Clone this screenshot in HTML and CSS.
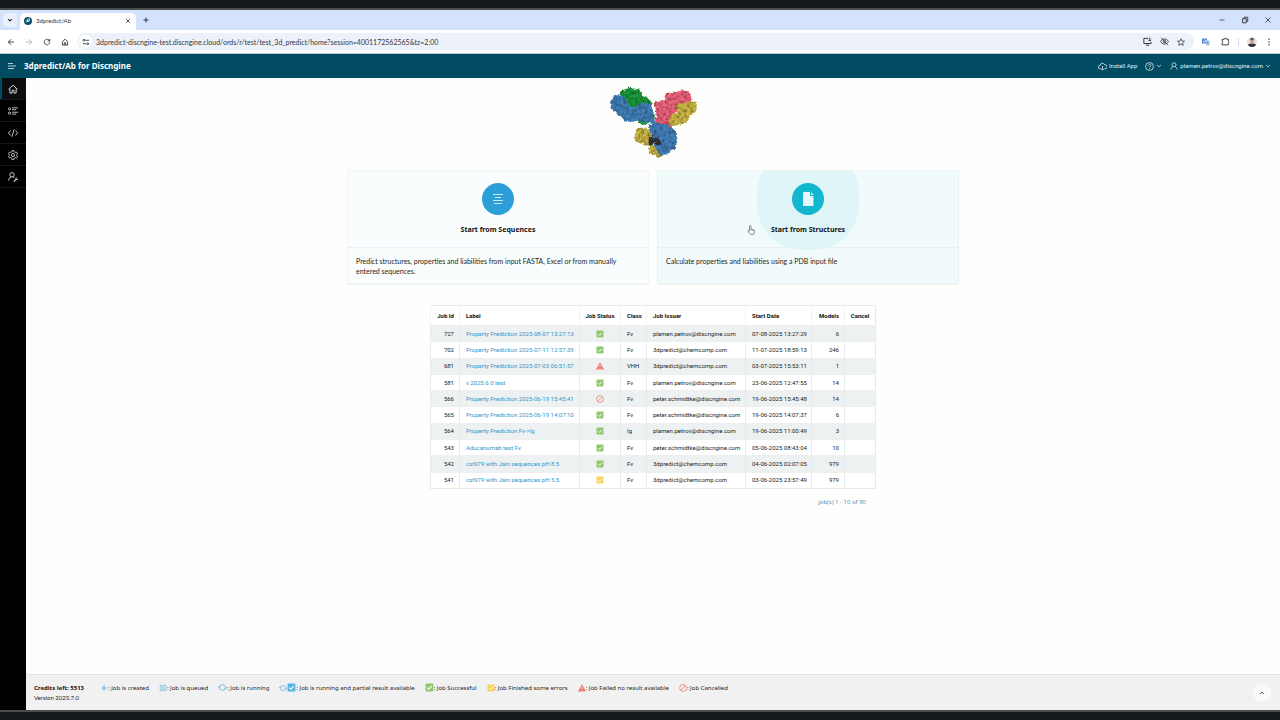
FILE: index.html
```html
<!DOCTYPE html>
<html lang="en">
<head>
<meta charset="utf-8">
<title>3dpredict/Ab</title>
<link rel="stylesheet" href="styles.css">
</head>
<body>
<svg class="sprite" aria-hidden="true">
  <symbol id="ok" viewBox="0 0 16 16"><rect x="1" y="1" width="14" height="14" rx="1.5" fill="currentColor"/><path d="M4 8.2l2.8 2.8L12 5.5" fill="none" stroke="#fff" stroke-width="1.8"/></symbol>
  <symbol id="warn" viewBox="0 0 16 16"><path d="M8 .5L16 15H0z" fill="currentColor"/><path d="M8 5.5v4.500M8 11.500v1.800" stroke="#fff" stroke-width="1.600"/></symbol>
  <symbol id="ban" viewBox="0 0 16 16"><g fill="none" stroke="currentColor" stroke-width="1.500"><circle cx="8" cy="8" r="6.800"/><path d="M3.300 12.700l9.400-9.400"/></g></symbol>
  <symbol id="plus" viewBox="0 0 16 16"><path d="M8 2v12M2 8h12" stroke="currentColor" stroke-width="1.800"/></symbol>
  <symbol id="queue" viewBox="0 0 16 16"><path d="M2.500 2.500h4v11h-4zM9.500 2.500h4v11h-4z" fill="none" stroke="currentColor" stroke-width="1.300"/></symbol>
  <symbol id="spin" viewBox="0 0 16 16"><g fill="none" stroke="currentColor" stroke-width="1.500"><path d="M2.200 7.500a6 6 0 0 1 11.600 0M13.800 8.500a6 6 0 0 1-11.600 0"/><path d="M0 6l2.200 2.500 2.300-2.500M16 10l-2.200-2.500L11.500 10"/></g></symbol>
  <symbol id="chev" viewBox="0 0 16 16"><path d="M3 5.500l5 5 5-5" fill="none" stroke="currentColor" stroke-width="2"/></symbol>
</svg>

<div class="edge edge-top"></div>

<header class="browser">
  <div class="tabs">
    <button class="tab-search" aria-label="Search tabs"><svg class="i6" viewBox="0 0 16 16"><path d="M3 5.500l5 5 5-5" fill="none" stroke="currentColor" stroke-width="3"/></svg></button>
    <div class="tab">
      <svg class="i8" viewBox="0 0 16 16"><circle cx="8" cy="8" r="8" fill="#0b5269"/><path d="M5 11C4 7 6 3 12 3c1 4-1 7-5 7z" fill="#d9edf5"/><circle cx="9.500" cy="6" r="1.500" fill="#0b5269"/></svg>
      <span class="tab-title">3dpredict/Ab</span>
      <button class="plain" aria-label="Close tab"><svg class="i6" viewBox="0 0 16 16"><path d="M3 3l10 10M13 3L3 13" stroke="currentColor" stroke-width="2.200"/></svg></button>
    </div>
    <button class="plain new-tab" aria-label="New tab"><svg class="i8" viewBox="0 0 16 16"><path d="M8 3v10M3 8h10" stroke="currentColor" stroke-width="2"/></svg></button>
    <div class="window-buttons">
      <button class="plain" aria-label="Minimize"><svg class="i8" viewBox="0 0 16 16"><path d="M3 8h10" stroke="currentColor" stroke-width="1.500"/></svg></button>
      <button class="plain" aria-label="Restore"><svg class="i8" viewBox="0 0 16 16"><path d="M3 5.500h7.500v8H3zM6 5.500v-3h7.500v8h-3" fill="none" stroke="currentColor" stroke-width="1.800"/></svg></button>
      <button class="plain" aria-label="Close"><svg class="i8" viewBox="0 0 16 16"><path d="M3 3l10 10M13 3L3 13" stroke="currentColor" stroke-width="1.600"/></svg></button>
    </div>
  </div>
  <div class="toolbar">
    <button class="plain" aria-label="Back"><svg class="i8" viewBox="0 0 16 16"><path d="M14 8H3M8 2.500L2.500 8 8 13.500" fill="none" stroke="currentColor" stroke-width="1.800"/></svg></button>
    <button class="plain faint" aria-label="Forward"><svg class="i8" viewBox="0 0 16 16"><path d="M2 8h11M8 2.500L13.500 8 8 13.500" fill="none" stroke="currentColor" stroke-width="1.800"/></svg></button>
    <button class="plain" aria-label="Reload"><svg class="i8" viewBox="0 0 16 16"><path d="M13.500 8a5.500 5.500 0 1 1-1.800-4.100L13.500 6M13.500 1.800V6H9.300" fill="none" stroke="currentColor" stroke-width="1.700"/></svg></button>
    <button class="plain" aria-label="Home"><svg class="i8" viewBox="0 0 16 16"><path d="M2.800 7L8 2.500 13.200 7v7.200H2.800zM6.500 14v-4.500h3V14" fill="none" stroke="currentColor" stroke-width="1.700"/></svg></button>
    <div class="address">
      <button class="site-info" aria-label="Site information"><svg class="i8" viewBox="0 0 16 16"><g fill="none" stroke="currentColor" stroke-width="1.800"><path d="M7 4.500h7M2 11.500h6"/><circle cx="4" cy="4.500" r="1.800"/><circle cx="11.500" cy="11.500" r="1.800"/></g></svg></button>
      <input class="url" aria-label="Address" value="3dpredict-discngine-test.discngine.cloud/ords/r/test/test_3d_predict/home?session=4001172562565&amp;tz=2:00">
      <button class="plain" aria-label="Install"><svg class="i9" viewBox="0 0 16 16"><path d="M9 2.500H1.500v9h13V9M5 14.500h6M12 1v6M9.500 5L12 7.500 14.500 5" fill="none" stroke="currentColor" stroke-width="1.700"/></svg></button>
      <button class="plain" aria-label="Third-party cookies"><svg class="i9" viewBox="0 0 16 16"><g fill="none" stroke="currentColor" stroke-width="1.500"><path d="M1 8c3-6 11-6 14 0-3 6-11 6-14 0z"/><circle cx="8" cy="8" r="2.500"/><path d="M2 1.500l12 13"/></g></svg></button>
      <button class="plain" aria-label="Bookmark"><svg class="i8" viewBox="0 0 16 16"><path d="M8 1.500l2 4.500 5 .5-3.800 3.300 1.200 4.900L8 12.100l-4.400 2.600 1.200-4.900L1 6.500 6 6z" fill="none" stroke="currentColor" stroke-width="1.500"/></svg></button>
    </div>
    <div class="extensions">
      <button class="plain translate" aria-label="Translate"><svg class="i8" viewBox="0 0 16 16"><rect x="0" y="1" width="10" height="10" rx="1" fill="#4a86dc"/><path d="M7 5h8v10H9z" fill="#b9cfee"/><path d="M2.500 6a2.500 2.500 0 1 0 2.500-2.500M5 6h2.500" fill="none" stroke="#fff" stroke-width="1.200"/><path d="M9 8h5M11.500 7v1c0 2-1 4-2.500 5M10 9c1 2 2 3 4 4" fill="none" stroke="#4472b8"/></svg></button>
      <button class="plain" aria-label="Extensions"><svg class="i9" viewBox="0 0 16 16"><path d="M2 4h4a2 2 0 0 1 4 0h3v4a2 2 0 0 1 0 3.500V14H2v-3.500a2 2 0 0 0 0-3.500z" fill="none" stroke="currentColor" stroke-width="1.700"/></svg></button>
      <span class="bar"></span>
      <button class="plain" aria-label="Profile"><svg class="i10" viewBox="0 0 20 20"><circle cx="10" cy="10" r="10" fill="#dfe2e6"/><path d="M2 16c1-4 15-4 16 0a10 10 0 0 1-16 0z" fill="#23272e"/><path d="M8 10h4v4l-2 2-2-2z" fill="#b7886c"/><ellipse cx="10" cy="7.500" rx="3.500" ry="4.500" fill="#c99b80"/><path d="M6 7c-1-7 9-7 8 0l-1-2H7z" fill="#231d1c"/></svg></button>
      <button class="plain" aria-label="Menu"><svg class="i8" viewBox="0 0 16 16"><g fill="currentColor"><circle cx="8" cy="2.500" r="1.500"/><circle cx="8" cy="8" r="1.500"/><circle cx="8" cy="13.500" r="1.500"/></g></svg></button>
    </div>
  </div>
</header>

<header class="app-bar">
  <button class="plain" aria-label="Main menu"><svg class="i8" viewBox="0 0 16 16"><path d="M0 3h10M0 8h16M0 13h12" stroke="currentColor" stroke-width="1.600"/></svg></button>
  <a class="brand" href="#">3dpredict/Ab for Discngine</a>
  <nav class="app-nav">
    <button class="plain"><svg class="i9" viewBox="0 0 16 16"><path d="M5 12H3.500a3 3 0 0 1 0-6A4.500 4.500 0 0 1 12 5a3.500 3.500 0 0 1 1 7h-1.500M8 7v7.500M5.500 12L8 14.500l2.500-2.500" fill="none" stroke="currentColor" stroke-width="1.400"/></svg>Install App</button>
    <button class="plain" aria-label="Help"><svg class="i9" viewBox="0 0 16 16"><g fill="none" stroke="currentColor" stroke-width="1.400"><circle cx="8" cy="8" r="7"/><path d="M5.800 6.500c0-3 4.600-3 4.600-.3C10.400 8 8 8 8 9.800M8 11v1.500"/></g></svg><svg class="i6"><use href="#chev"/></svg></button>
    <button class="plain"><svg class="i8" viewBox="0 0 16 16"><g fill="none" stroke="currentColor" stroke-width="1.500"><circle cx="8" cy="5.500" r="4"/><path d="M2 15c0-3.500 2-5 4-5.500M14 15c0-3.500-2-5-4-5.500"/></g></svg>plamen.petrov@discngine.com<svg class="i6"><use href="#chev"/></svg></button>
  </nav>
</header>

<div class="shell">
  <nav class="side">
    <a class="side-link current" href="#" aria-label="Home"><svg class="i10" viewBox="0 0 16 16"><path d="M.8 8.500L8 1.800l7.200 6.700M3 7v7.500h3.500V10h3v4.500H13V7" fill="none" stroke="currentColor" stroke-width="1.400"/></svg></a>
    <a class="side-link" href="#" aria-label="Jobs"><svg class="i10" viewBox="0 0 16 16"><g fill="none" stroke="currentColor" stroke-width="1.300"><circle cx="2.500" cy="4.500" r="1.800"/><circle cx="2.500" cy="11.500" r="1.800"/><path d="M6.500 3H16M6.500 6H13M6.500 10H16M6.500 13H13"/></g></svg></a>
    <a class="side-link" href="#" aria-label="Code"><svg class="i10" viewBox="0 0 16 16"><path d="M4 4L.7 8 4 12M12 4l3.300 4L12 12M10 2L6 14" fill="none" stroke="currentColor" stroke-width="1.300"/></svg></a>
    <a class="side-link" href="#" aria-label="Settings"><svg class="i10" viewBox="0 0 16 16"><g fill="none" stroke="currentColor" stroke-width="1.300"><path d="M6.500 1h3l.6 2 1.600.9 2.100-.5 1.500 2.600L13.900 7.500v1.200l1.400 1.400-1.500 2.600-2.100-.5-1.600.9-.6 2h-3l-.6-2-1.600-.9-2.100.5-1.500-2.600 1.400-1.400V7.500L.7 6l1.500-2.600 2.100.5L5.900 3z"/><circle cx="8" cy="8" r="2.500"/></g></svg></a>
    <a class="side-link" href="#" aria-label="Administration"><svg class="i10" viewBox="0 0 16 16"><g fill="none" stroke="currentColor" stroke-width="1.400"><circle cx="6.500" cy="4.500" r="3.500"/><path d="M1 13.500c0-3 1.500-4.500 4-5.500M8 7.500l2 2"/></g><path d="M8.500 15l3.500-3.500c-.5-2 1-3 2.500-2.500L13 10.500l1 1 1.700-1.300c.3 2-1.200 3-2.500 2.700L10 16z" fill="currentColor"/></svg></a>
  </nav>

  <main class="page">
    <svg class="molecule" viewBox="60 20 261 216" role="img" aria-label="Antibody structure">
      <filter id="bumps" x="-5%" y="-5%" width="110%" height="110%" color-interpolation-filters="sRGB">
        <feTurbulence type="fractalNoise" baseFrequency=".11" numOctaves="2" seed="4" result="n"/>
        <feDisplacementMap in="SourceGraphic" in2="n" scale="12" xChannelSelector="R" yChannelSelector="G" result="d"/>
        <feColorMatrix in="n" type="matrix" values="0 0 0 0 0  0 0 0 0 0  0 0 0 0 0  .8 0 0 0 -.3" result="s"/>
        <feComposite in="s" in2="d" operator="in" result="shade"/>
        <feMerge><feMergeNode in="d"/><feMergeNode in="shade"/></feMerge>
      </filter>
      <g filter="url(#bumps)" stroke-width="5" stroke-linejoin="round">
        <path fill="#1a9a3b" stroke="#1a9a3b" d="M88 45l27-18 14 4 16-1 8 18 14 6 16 16-2 12-30-4-16 8-22-8-14-26zM148 120h20l6 10-14 4-12-4zM172 106h20v12h-18z"/>
        <path fill="#4280bb" stroke="#4280bb" d="M63 68l12-18 24 2 10 14 12 22h12l15-14 24-1 13 14 3 16-5 18-18 5-20-6-18 5-22-1-15-17-14-16-11-4zM170 114h16l12 22-10 4-8-14-10-4z"/>
        <path fill="#f0637c" stroke="#f0637c" d="M196 70l28-6 6-20 30-4 14-4 20 2 8 18-4 18-30 8-16 18-4 16 6 14-12 14-34-6-12-14 6-16z"/>
        <path fill="#ccb844" stroke="#ccb844" d="M264 78l28-10 26 2-2 24-18 12-6 16-22 12-26 3-6-12 10-21 14 1z"/>
        <path fill="#ccb844" stroke="#ccb844" d="M138 156l16-10 32 12-2 38h-18l-30-14zM180 198l22 4 22 20-14 10-14-6-16-6z"/>
        <path fill="#4280bb" stroke="#4280bb" d="M180 140l22-9 34 9 22 20-2 46-16 4-4 12-26 2-14-24-8-26-6-18z"/>
        <path fill="#34373c" d="M176 180l12-14 2 20 4-16 18 14 2 14-14-2-10-4-14 12z"/>
      </g>
    </svg>

    <div class="cards">
      <a class="card" href="#">
        <div class="card-head">
          <span class="card-icon blue"><svg class="i16" viewBox="0 0 16 16"><path d="M3 3.500h10M5 6.500h6M3 9.500h10M4 12.500h8" stroke="#c8ebf7" stroke-width="1"/></svg></span>
          <h3 class="card-title">Start from Sequences</h3>
        </div>
        <p class="card-text">Predict structures, properties and liabilities from input FASTA, Excel or from manually entered sequences.</p>
      </a>
      <a class="card hover" href="#">
        <div class="card-head">
          <span class="card-icon teal"><svg class="i16" viewBox="0 0 16 16"><path d="M3 1h7v4h3.500v10H3z" fill="#e4f8fb"/><path d="M11 1l2.500 3H11z" fill="#e4f8fb"/></svg></span>
          <h3 class="card-title">Start from Structures</h3>
        </div>
        <p class="card-text">Calculate properties and liabilities using a PDB input file</p>
        <svg class="pointer" viewBox="0 0 16 20"><path d="M5 12V2.500a1.400 1.400 0 0 1 3 0V8l5 1.200c1.500.5 2 1.300 1.800 2.800l-1 6.500H6.500L1.500 12c.5-1.500 2-1.200 3.500.5" fill="#fff" stroke="#4c5358" stroke-width="1.300"/><path d="M8 8v3M10.500 9v2.500M13 10v2" stroke="#4c5358"/></svg>
      </a>
    </div>

    <section class="report">
      <table class="jobs">
        <colgroup><col class="c-id"><col class="c-label"><col class="c-status"><col class="c-class"><col class="c-issuer"><col class="c-date"><col class="c-models"><col></colgroup>
        <thead><tr><th class="num">Job Id</th><th>Label</th><th class="mid">Job Status</th><th>Class</th><th>Job Issuer</th><th>Start Date</th><th class="num">Models</th><th class="mid">Cancel</th></tr></thead>
        <tbody>
          <tr><td class="num">727</td><td><a href="#">Property Prediction 2025-08-07 13:27:13</a></td><td class="mid"><svg class="i8 green"><use href="#ok"/></svg></td><td>Fv</td><td>plamen.petrov@discngine.com</td><td>07-08-2025 13:27:29</td><td class="num">6</td><td></td></tr>
          <tr><td class="num">702</td><td><a href="#">Property Prediction 2025-07-11 12:57:39</a></td><td class="mid"><svg class="i8 green"><use href="#ok"/></svg></td><td>Fv</td><td>3dpredict@chemcomp.com</td><td>11-07-2025 18:59:13</td><td class="num">246</td><td></td></tr>
          <tr><td class="num">681</td><td><a href="#">Property Prediction 2025-07-03 06:51:57</a></td><td class="mid"><svg class="i8 red"><use href="#warn"/></svg></td><td>VHH</td><td>3dpredict@chemcomp.com</td><td>03-07-2025 15:53:11</td><td class="num">1</td><td></td></tr>
          <tr><td class="num">581</td><td><a href="#">v.2025.6.0 test</a></td><td class="mid"><svg class="i8 green"><use href="#ok"/></svg></td><td>Fv</td><td>plamen.petrov@discngine.com</td><td>23-06-2025 12:47:55</td><td class="num">14</td><td></td></tr>
          <tr><td class="num">566</td><td><a href="#">Property Prediction 2025-06-19 15:45:41</a></td><td class="mid"><svg class="i8 red"><use href="#ban"/></svg></td><td>Fv</td><td>peter.schmidtke@discngine.com</td><td>19-06-2025 15:45:48</td><td class="num">14</td><td></td></tr>
          <tr><td class="num">565</td><td><a href="#">Property Prediction 2025-06-19 14:07:10</a></td><td class="mid"><svg class="i8 green"><use href="#ok"/></svg></td><td>Fv</td><td>peter.schmidtke@discngine.com</td><td>19-06-2025 14:07:37</td><td class="num">6</td><td></td></tr>
          <tr><td class="num">564</td><td><a href="#">Property Prediction Fv-&gt;Ig</a></td><td class="mid"><svg class="i8 green"><use href="#ok"/></svg></td><td>Ig</td><td>plamen.petrov@discngine.com</td><td>19-06-2025 11:00:49</td><td class="num">3</td><td></td></tr>
          <tr><td class="num">543</td><td><a href="#">Aducanumab test Fv</a></td><td class="mid"><svg class="i8 green"><use href="#ok"/></svg></td><td>Fv</td><td>peter.schmidtke@discngine.com</td><td>05-06-2025 08:43:04</td><td class="num">10</td><td></td></tr>
          <tr><td class="num">542</td><td><a href="#">cst979 with Jain sequences pH 8.5</a></td><td class="mid"><svg class="i8 green"><use href="#ok"/></svg></td><td>Fv</td><td>3dpredict@chemcomp.com</td><td>04-06-2025 02:07:05</td><td class="num">979</td><td></td></tr>
          <tr><td class="num">541</td><td><a href="#">cst979 with Jain sequences pH 5.5</a></td><td class="mid"><svg class="i8 yellow"><use href="#ok"/></svg></td><td>Fv</td><td>3dpredict@chemcomp.com</td><td>03-06-2025 23:57:49</td><td class="num">979</td><td></td></tr>
        </tbody>
      </table>
      <p class="pager">job(s) 1 - 10 of 90</p>
    </section>

    <footer class="footer">
      <div>
        <div class="legend">
          <strong class="credits">Credits left: 5513</strong>
          <span class="key"><svg class="i8 sky"><use href="#plus"/></svg>: Job is created</span>
          <span class="key"><svg class="i8 sky"><use href="#queue"/></svg>: Job is queued</span>
          <span class="key"><svg class="i9 sky"><use href="#spin"/></svg>: Job is running</span>
          <span class="key"><svg class="i8 sky"><use href="#spin"/></svg><svg class="i9 sky"><use href="#ok"/></svg>: Job is running and partial result available</span>
          <span class="key"><svg class="i9 green"><use href="#ok"/></svg>: Job Successful</span>
          <span class="key"><svg class="i8 yellow"><use href="#ok"/></svg>: Job Finished some errors</span>
          <span class="key"><svg class="i8 red"><use href="#warn"/></svg>: Job Failed no result available</span>
          <span class="key"><svg class="i8 red"><use href="#ban"/></svg>: Job Cancelled</span>
        </div>
        <div class="version">Version 2025.7.0</div>
      </div>
      <button class="to-top" aria-label="Back to top"><svg class="i6 flip"><use href="#chev"/></svg></button>
    </footer>
  </main>
</div>
<div class="edge edge-bottom"></div>
</body>
</html>
```
FILE: styles.css
```css
* { box-sizing: border-box; }
body {
  margin: 0;
  min-height: 100vh;
  display: flex;
  flex-direction: column;
  background: #fefefc;
  color: #1c1c1c;
  font: 7px/10px Lato, "Open Sans", sans-serif;
}
button { font: inherit; color: inherit; cursor: pointer; }
a { text-decoration: none; color: inherit; }
svg { display: block; flex: none; }
.sprite { width: 0; height: 0; position: absolute; }
.i6 { width: 6px; height: 6px; }
.i8 { width: 8px; height: 8px; }
.i9 { width: 9px; height: 9px; }
.i10 { width: 10px; height: 10px; }
.i16 { width: 16px; height: 16px; }
.green { color: #8fc96c; }
.red { color: #ee7770; }
.yellow { color: #fbd35c; }
.sky { color: #58b4e0; }
.flip { transform: rotate(180deg); }
.plain {
  display: flex;
  align-items: center;
  gap: 2px;
  padding: 0;
  border: 0;
  background: none;
}
.faint { color: #b1b3b5; }

.edge { height: 10px; background: #14191c; flex: none; }
.edge-top { border-bottom: 2px solid #4a4c4e; }
.edge-bottom { border-top: 2px solid #4a4c4e; }

.browser { background: #fff; color: #303336; border-bottom: 1px solid #bfcbd2; }
.tabs {
  height: 20px;
  padding: 0 8px 0 3px;
  display: flex;
  align-items: center;
  background: #d3e3fd;
}
.tab-search {
  width: 14px;
  height: 14px;
  display: grid;
  place-items: center;
  padding: 0;
  border: 0;
  border-radius: 4px;
  background: #e9f0fb;
}
.tab {
  align-self: flex-end;
  width: 116px;
  height: 17px;
  margin-left: 3px;
  padding: 0 5px 2px 4px;
  display: flex;
  align-items: center;
  gap: 4px;
  border-radius: 5px 5px 0 0;
  background: #fff;
}
.tab-title { flex: 1; font-size: 6px; }
.new-tab { margin-left: 6px; }
.window-buttons { margin-left: auto; display: flex; gap: 15px; }
.toolbar { height: 23px; padding: 0 7px; display: flex; align-items: center; gap: 10px; }
.address {
  flex: 1;
  height: 17px;
  margin: 0 -2px;
  padding: 0 9px 0 2px;
  display: flex;
  align-items: center;
  gap: 8px;
  border-radius: 9px;
  background: #edf2fa;
}
.site-info {
  width: 13px;
  height: 13px;
  display: grid;
  place-items: center;
  padding: 0;
  border: 0;
  border-radius: 50%;
  background: #fff;
}
.url {
  flex: 1;
  min-width: 0;
  margin-left: -4px;
  padding: 0;
  border: 0;
  background: none;
  color: #34373b;
  font: inherit;
}
.extensions { display: flex; align-items: center; gap: 8px; }
.translate { margin-right: 3px; }
.bar { width: 1px; height: 8px; background: #c9dbf5; }

.app-bar {
  height: 24px;
  padding: 0 9px 0 8px;
  display: flex;
  align-items: center;
  gap: 8px;
  background: #024c63;
  color: #e3edf0;
}
.brand { font: 700 8px/12px "Noto Sans", sans-serif; color: #fff; }
.app-nav { margin-left: auto; display: flex; align-items: center; gap: 8px; font: 6px/10px Roboto, sans-serif; }

.shell { flex: 1; display: flex; }
.side { width: 26px; background: #000; color: #e3e6e8; }
.side-link {
  height: 22px;
  display: grid;
  place-items: center;
  border-bottom: 1px solid #15181a;
}
.current { background: #0c0d0e; box-shadow: inset 2px 0 #024c63; }

.page { flex: 1; display: flex; flex-direction: column; align-items: center; padding-top: 8px; }
.molecule { width: 87px; height: 72px; }
.cards {
  width: 100%;
  max-width: 612px;
  margin-top: 12px;
  display: grid;
  grid-template-columns: 1fr 1fr;
  gap: 8px;
}
.card {
  position: relative;
  overflow: hidden;
  border: 1px solid #eff4f6;
  border-radius: 2px;
  background: #fafdfd;
  box-shadow: 0 1px 1px #eef2f3;
  color: #1c1f21;
}
.hover { background: #f2fbfb; border-color: #e8f3f5; }
.card-head {
  height: 77px;
  padding-top: 12px;
  display: flex;
  flex-direction: column;
  align-items: center;
  border-bottom: 1px solid #e9f0f5;
}
.card-icon {
  width: 32px;
  height: 32px;
  display: grid;
  place-items: center;
  border-radius: 50%;
}
.blue { background: #2c9fd8; }
.teal { background: #13b6cf; }
.hover .card-icon { box-shadow: 0 0 0 35px #e0f5f7; }
.card-title { position: relative; margin: 9px 0 0; font: 700 7px/12px "Noto Sans", sans-serif; color: #111; }
.card-text { margin: 0; padding: 8px 8px 7px; min-height: 35px; }
.pointer {
  position: absolute;
  left: 89px;
  top: 54px;
  width: 8px;
  height: 10px;
}

.report { width: 446px; margin-top: 21px; }
.jobs {
  width: 100%;
  height: 184px;
  table-layout: fixed;
  border-collapse: collapse;
  border: 1px solid #e9ebeb;
  background: #fff;
  font: 6px/10px Roboto, sans-serif;
}
.c-id { width: 29px; }
.c-label { width: 120px; }
.c-status { width: 41px; }
.c-class { width: 26px; }
.c-issuer { width: 99px; }
.c-date { width: 66px; }
.c-models { width: 33px; }
.jobs th, .jobs td {
  padding: 0 0 0 6px;
  border-left: 1px solid #e9ebeb;
  text-align: left;
  white-space: nowrap;
}
.jobs th { height: 20px; font-weight: 700; color: #111; border-left-color: #f1f3f3; }
.jobs tbody tr { border-top: 1px solid #eef0f0; }
.jobs tbody tr:nth-child(odd) { background: #eef1f1; }
.jobs .num { padding: 0 5px 0 0; text-align: right; }
.jobs .mid { padding: 0; text-align: center; }
.jobs td svg { margin: 0 auto; }
.jobs a { color: #2d97cc; }
.pager { margin: 8px 10px 0; text-align: right; color: #4787ad; font: 6px/10px "Open Sans", sans-serif; }

.footer {
  align-self: stretch;
  margin-top: auto;
  height: 36px;
  padding: 0 9px 0 8px;
  display: flex;
  align-items: center;
  justify-content: space-between;
  border-top: 1px solid #e3e4e4;
  background: #f1f1f2;
  font: 6px/10px "Noto Sans", sans-serif;
}
.legend { display: flex; flex-wrap: wrap; gap: 10px; }
.key { display: flex; align-items: center; }
.credits { margin-right: 6px; color: #111; }
.version { font-family: Lato, sans-serif; }
.to-top {
  width: 18px;
  height: 18px;
  display: grid;
  place-items: center;
  padding: 0;
  border: 0;
  border-radius: 50%;
  background: #fafafa;
}
```
